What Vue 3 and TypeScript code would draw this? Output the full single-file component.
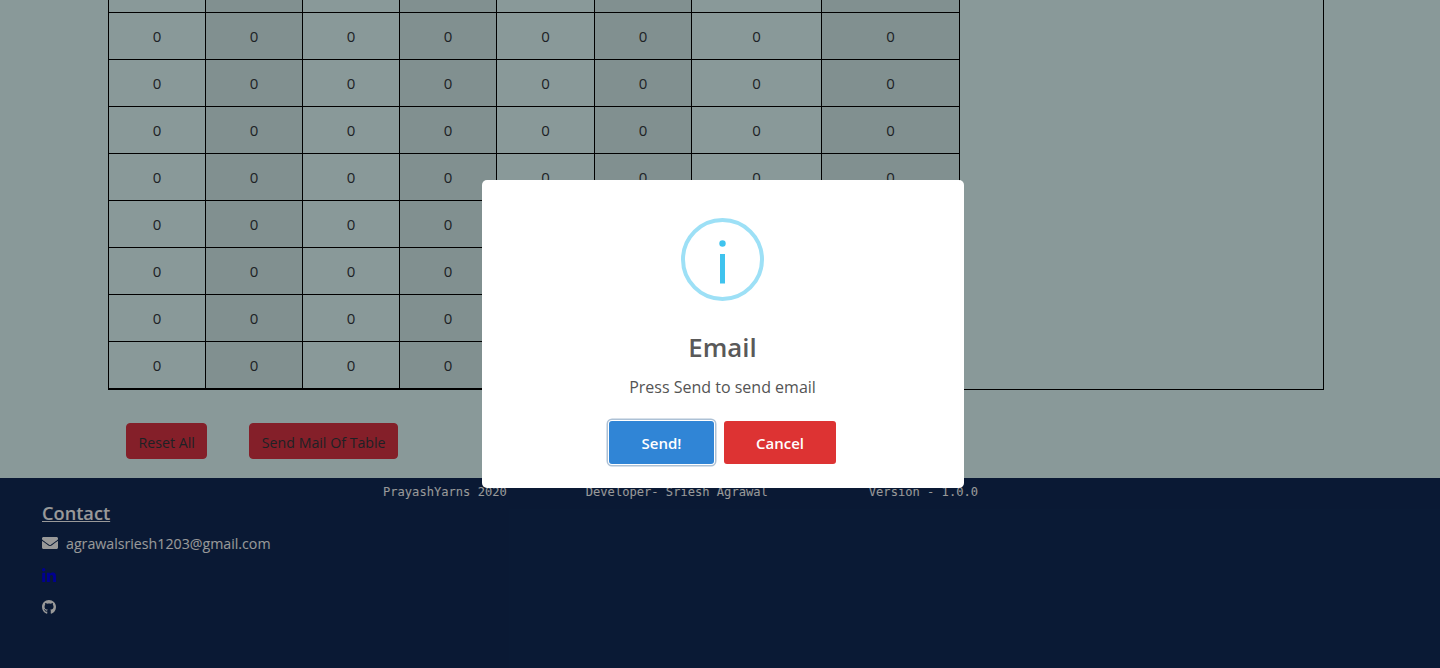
<script setup lang="ts">
const widths: number[] = [97, 97, 97, 97, 98, 97, 130, 138];
const rows: number[] = [1, 2, 3, 4, 5, 6, 7, 8];
</script>

<template>
  <div class="page">
    <main class="content">
      <div class="table-box">
        <table class="grid">
          <colgroup>
            <col v-for="(w, i) in widths" :key="i" :style="{ width: w + 'px' }" />
          </colgroup>
          <tbody>
            <tr class="cut-row">
              <td v-for="(w, i) in widths" :key="i"></td>
            </tr>
            <tr v-for="r in rows" :key="r">
              <td v-for="(w, i) in widths" :key="i">0</td>
            </tr>
          </tbody>
        </table>
      </div>
      <div class="actions">
        <button class="danger reset">Reset All</button>
        <button class="danger">Send Mail Of Table</button>
      </div>
    </main>

    <footer class="footer">
      <div class="credits">
        <span>PrayashYarns 2020</span>
        <span>Developer- Sriesh Agrawal</span>
        <span>Version - 1.0.0</span>
      </div>
      <div class="contact">
        <h3 class="contact-title">Contact</h3>
        <div class="contact-row">
          <svg class="mail-icon" viewBox="0 0 512 512" fill="currentColor"><path d="M502.3 190.8c3.9-3.1 9.7-.2 9.7 4.7V400c0 26.5-21.5 48-48 48H48c-26.5 0-48-21.5-48-48V195.6c0-5 5.7-7.8 9.7-4.7 22.4 17.4 52.1 39.5 154.1 113.6 21.1 15.4 56.7 47.8 92.2 47.6 35.7.3 72-32.8 92.3-47.6 102-74.1 131.6-96.3 154-113.7zM256 320c23.2.4 56.6-29.2 73.4-41.4 132.7-96.3 142.8-104.7 173.4-128.7 5.8-4.5 9.2-11.5 9.2-18.9v-19c0-26.5-21.5-48-48-48H48C21.5 64 0 85.5 0 112v19c0 7.4 3.4 14.3 9.2 18.9 30.6 23.9 40.7 32.4 173.4 128.7 16.8 12.2 50.2 41.8 73.4 41.4z"/></svg>
          <span>agrawalsriesh1203@gmail.com</span>
        </div>
        <a class="icon-link linkedin" href="#">
          <svg viewBox="0 0 448 512" fill="currentColor"><path d="M100.28 448H7.4V148.9h92.88zM53.79 108.1C24.09 108.1 0 83.5 0 53.8a53.79 53.79 0 0 1 107.58 0c0 29.7-24.1 54.3-53.79 54.3zM447.9 448h-92.68V302.4c0-34.7-.7-79.2-48.29-79.2-48.29 0-55.69 37.7-55.69 76.7V448h-92.78V148.9h89.08v40.8h1.3c12.4-23.5 42.69-48.3 87.88-48.3 94 0 111.28 61.9 111.28 142.3V448z"/></svg>
        </a>
        <a class="icon-link github" href="#">
          <svg viewBox="0 0 496 512" fill="currentColor"><path d="M244.8 8C106.1 8 0 113.3 0 252c0 110.9 69.8 205.8 169.5 239.2 12.8 2.3 17.3-5.6 17.3-12.1 0-6.2-.3-40.4-.3-61.4 0 0-70 15-84.7-29.8 0 0-11.4-29.1-27.8-36.6 0 0-22.9-15.7 1.6-15.4 0 0 24.9 2 38.6 25.8 21.9 38.6 58.6 27.5 72.9 20.9 2.3-16 8.8-27.1 16-33.7-55.9-6.2-112.3-14.3-112.3-110.5 0-27.5 7.6-41.3 23.6-58.9-2.6-6.5-11.1-33.3 2.6-67.9 20.9-6.5 69 27 69 27 20-5.6 41.5-8.5 62.8-8.5s42.8 2.9 62.8 8.5c0 0 48.1-33.6 69-27 13.7 34.7 5.2 61.4 2.6 67.9 16 17.7 25.8 31.5 25.8 58.9 0 96.5-58.9 104.2-114.8 110.5 9.2 7.9 17 22.9 17 46.4 0 33.7-.3 75.4-.3 83.6 0 6.5 4.6 14.4 17.3 12.1C428.2 457.8 496 362.9 496 252 496 113.3 383.5 8 244.8 8z"/></svg>
        </a>
      </div>
    </footer>

    <div class="backdrop">
      <div class="modal">
        <svg class="info-icon" viewBox="0 0 83 83">
          <circle cx="41.5" cy="41.5" r="39.5" fill="none" stroke="#9de0f6" stroke-width="4" />
          <circle cx="41.5" cy="25.5" r="3.2" fill="#3fc3ee" />
          <rect x="39" y="36" width="5" height="29.5" fill="#3fc3ee" />
        </svg>
        <h2 class="modal-title">Email</h2>
        <p class="modal-text">Press Send to send email</p>
        <div class="modal-buttons">
          <button class="confirm">Send!</button>
          <button class="cancel">Cancel</button>
        </div>
      </div>
    </div>
  </div>
</template>

<style>
html,
body {
  margin: 0;
  padding: 0;
}
</style>

<style scoped>
.page {
  position: relative;
  width: 1440px;
  height: 668px;
  overflow: hidden;
  display: flex;
  flex-direction: column;
  background: #e5ffff;
  font-family: "Open Sans", "Noto Sans", sans-serif;
  color: #33383e;
}

.content {
  height: 478px;
  padding-left: 108px;
  box-sizing: border-box;
}

.table-box {
  width: 1216px;
  height: 390px;
  box-sizing: border-box;
  border-right: 1px solid #000;
  border-bottom: 1px solid #000;
}

.grid {
  width: 852px;
  table-layout: fixed;
  border-collapse: collapse;
  font-size: 15px;
  text-align: center;
}

.grid td {
  height: 46px;
  padding: 0;
  border: 1px solid #000;
  box-sizing: content-box;
}

.grid td:nth-child(even) {
  background: rgba(0, 0, 0, 0.06);
}

.grid .cut-row td {
  height: 12px;
  border-top: none;
}

.actions {
  display: flex;
  gap: 42px;
  padding: 33px 0 0 18px;
}

.danger {
  height: 36px;
  padding: 2px 11.5px 0;
  border: 1px solid #dc3545;
  border-radius: 4px;
  background: #dc3545;
  color: #33383e;
  font-family: inherit;
  font-size: 14.2px;
}

.footer {
  flex: 1;
  background: #112b58;
  color: #fff;
}

.credits {
  display: flex;
  gap: 79px;
  padding: 7px 0 0 383px;
  font-family: "DejaVu Sans Mono", monospace;
  font-size: 12.1px;
  line-height: 14px;
}

.credits span:last-child {
  margin-left: 22px;
}

.contact {
  padding: 1px 0 0 42px;
}

.contact-title {
  margin: 0;
  font-size: 18.2px;
  font-weight: 600;
  line-height: 26px;
  text-decoration: underline;
}

.contact-row {
  display: flex;
  align-items: center;
  gap: 8px;
  margin-top: 5px;
  height: 24px;
  font-size: 14.2px;
}

.mail-icon {
  width: 16px;
  height: 16px;
}

.icon-link {
  display: block;
  width: 14px;
  height: 16px;
}

.icon-link svg {
  display: block;
  width: 14px;
  height: 16px;
}

.linkedin {
  margin-top: 13px;
  color: #0000ee;
}

.github {
  margin-top: 15px;
  color: #fff;
}

.backdrop {
  position: absolute;
  inset: 0;
  display: flex;
  align-items: center;
  justify-content: center;
  padding-left: 5px;
  background: rgba(0, 0, 0, 0.4);
}

.modal {
  width: 482px;
  height: 308px;
  box-sizing: border-box;
  padding-top: 38px;
  display: flex;
  flex-direction: column;
  align-items: center;
  background: #fff;
  border-radius: 5px;
}

.info-icon {
  width: 83px;
  height: 83px;
}

.modal-title {
  margin: 28px 0 0;
  font-size: 25.8px;
  font-weight: 600;
  line-height: 36px;
  color: #595959;
}

.modal-text {
  margin: 11px 0 0;
  font-size: 16px;
  line-height: 22px;
  color: #545454;
}

.modal-buttons {
  display: flex;
  gap: 10px;
  margin-top: 23px;
}

.modal-buttons button {
  height: 43px;
  border: none;
  border-radius: 3px;
  color: #fff;
  font-family: inherit;
  font-size: 15px;
  font-weight: 600;
}

.confirm {
  width: 105px;
  background: #3085d6;
  box-shadow: 0 0 0 1px #fff, 0 0 0 2.5px rgba(50, 100, 150, 0.4);
}

.cancel {
  width: 112px;
  background: #dd3333;
}
</style>
